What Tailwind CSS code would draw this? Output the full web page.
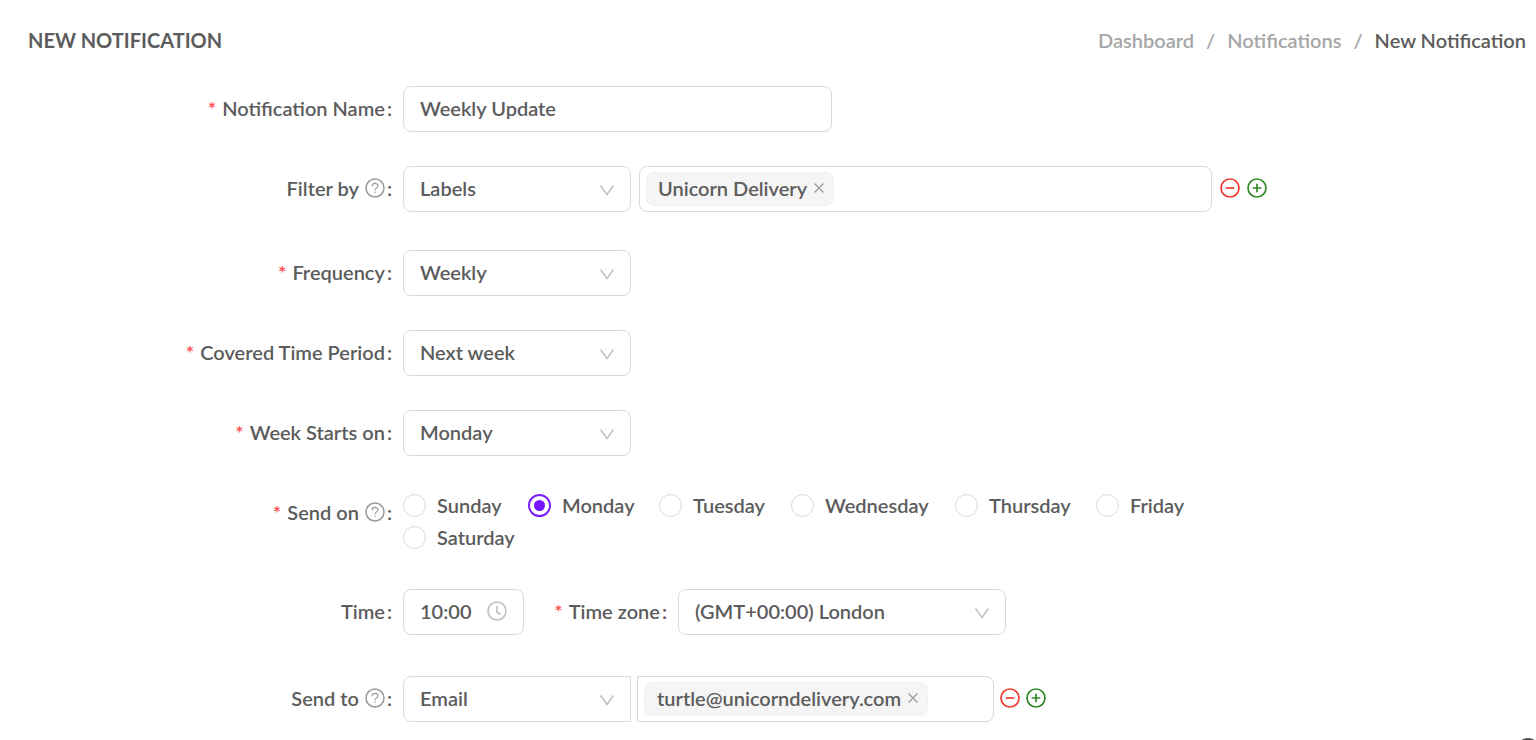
<!DOCTYPE html>
<html lang="en">
<head>
<meta charset="utf-8">
<meta name="viewport" content="width=device-width, initial-scale=1">
<title>New Notification</title>
<script src="https://cdn.jsdelivr.net/npm/@tailwindcss/browser@4"></script>
</head>
<body class="relative min-h-screen overflow-x-hidden bg-white font-['Lato','Open_Sans',sans-serif] text-xl leading-6 font-semibold text-[#5c5c5c]">

<svg class="hidden">
  <symbol id="chevron" viewBox="0 0 16 16"><path d="M1.500 3.500l6.500 9 6.500-9" fill="none" stroke="currentColor" stroke-width="1.500"/></symbol>
  <symbol id="help" viewBox="0 0 20 20"><g fill="none" stroke="currentColor"><circle cx="10" cy="10" r="9" stroke-width="1.500"/><path d="M7.200 8.200c0-3.900 5.700-3.700 5.700-.3 0 2-2.900 2-2.900 4.400" stroke-width="1.200"/></g><circle cx="10" cy="14.300" r=".8" fill="currentColor"/></symbol>
  <symbol id="cross" viewBox="0 0 12 12"><path d="M1.500 1.500l9 9M10.500 1.500l-9 9" fill="none" stroke="currentColor" stroke-width="1.200"/></symbol>
  <symbol id="minus" viewBox="0 0 20 20"><g fill="none" stroke="currentColor" stroke-width="1.700"><circle cx="10" cy="10" r="9"/><path d="M5.700 10h8.600"/></g></symbol>
  <symbol id="plus" viewBox="0 0 20 20"><g fill="none" stroke="currentColor" stroke-width="1.700"><circle cx="10" cy="10" r="9"/><path d="M5.700 10h8.600M10 5.700v8.600"/></g></symbol>
  <symbol id="clock" viewBox="0 0 20 20"><g fill="none" stroke="currentColor" stroke-width="1.600"><circle cx="10" cy="10" r="9"/><path d="M10 5v6l3.500 2.500"/></g></symbol>
</svg>

<header class="flex items-center justify-between pt-[26px] pr-2.5 pl-7">
  <h1 class="text-xl leading-7 font-bold">NEW NOTIFICATION</h1>
  <nav aria-label="Breadcrumb">
    <ol class="flex gap-3 leading-7 text-[#a6a6a6]">
      <li><a href="#">Dashboard</a></li>
      <li aria-hidden="true">/</li>
      <li><a href="#">Notifications</a></li>
      <li aria-hidden="true">/</li>
      <li class="text-[#5c5c5c]" aria-current="page">New Notification</li>
    </ol>
  </nav>
</header>

<form class="pt-8">
  <div class="mb-[34px] flex items-center gap-[11px]">
    <label for="name" class="w-[392px] shrink-0 pb-0.5 text-right"><span class="mr-1.5 text-[#ff4d4f]">*</span>Notification Name<span class="ml-0.5">:</span></label>
    <input id="name" type="text" value="Weekly Update" class="h-[46px] w-[429px] rounded-lg border border-[#d9d9d9] px-4 pb-0.5 outline-none">
  </div>

  <div class="mb-[38px] flex items-center gap-[11px]">
    <div class="flex w-[392px] shrink-0 items-center justify-end pb-0.5"><label for="filter" class="mr-1.5">Filter by</label><svg class="size-5 text-[#999999]"><use href="#help"/></svg><span class="ml-0.5">:</span></div>
    <div class="flex items-center">
      <div class="relative mr-2">
        <select id="filter" class="h-[46px] w-[228px] appearance-none rounded-lg border border-[#d9d9d9] bg-white px-4 pb-0.5 outline-none"><option>Labels</option></select>
        <svg class="pointer-events-none absolute top-4 right-4 size-4 text-[#bfbfbf]"><use href="#chevron"/></svg>
      </div>
      <div class="mr-2 flex h-[46px] w-[573px] items-center rounded-lg border border-[#d9d9d9] px-1.5">
        <span class="flex h-[34px] shrink-0 items-center gap-1.5 rounded-lg border border-[#f0f0f0] bg-[#f5f5f5] pr-2 pb-0.5 pl-[11px]">Unicorn Delivery<button type="button" aria-label="Remove Unicorn Delivery"><svg class="size-3 text-[#999999]"><use href="#cross"/></svg></button></span>
        <input type="text" aria-label="Label values" class="min-w-0 flex-1 outline-none">
      </div>
      <button type="button" aria-label="Remove filter" class="mr-[7px] pb-0.5 text-[#ee3a2c]"><svg class="size-5"><use href="#minus"/></svg></button>
      <button type="button" aria-label="Add filter" class="pb-0.5 text-[#2f8a25]"><svg class="size-5"><use href="#plus"/></svg></button>
    </div>
  </div>

  <div class="mb-[34px] flex items-center gap-[11px]">
    <label for="freq" class="w-[392px] shrink-0 pb-0.5 text-right"><span class="mr-1.5 text-[#ff4d4f]">*</span>Frequency<span class="ml-0.5">:</span></label>
    <div class="relative">
      <select id="freq" class="h-[46px] w-[228px] appearance-none rounded-lg border border-[#d9d9d9] bg-white px-4 pb-0.5 outline-none"><option>Weekly</option></select>
      <svg class="pointer-events-none absolute top-4 right-4 size-4 text-[#bfbfbf]"><use href="#chevron"/></svg>
    </div>
  </div>

  <div class="mb-[34px] flex items-center gap-[11px]">
    <label for="period" class="w-[392px] shrink-0 pb-0.5 text-right"><span class="mr-1.5 text-[#ff4d4f]">*</span>Covered Time Period<span class="ml-0.5">:</span></label>
    <div class="relative">
      <select id="period" class="h-[46px] w-[228px] appearance-none rounded-lg border border-[#d9d9d9] bg-white px-4 pb-0.5 outline-none"><option>Next week</option></select>
      <svg class="pointer-events-none absolute top-4 right-4 size-4 text-[#bfbfbf]"><use href="#chevron"/></svg>
    </div>
  </div>

  <div class="mb-[34px] flex items-center gap-[11px]">
    <label for="start" class="w-[392px] shrink-0 pb-0.5 text-right"><span class="mr-1.5 text-[#ff4d4f]">*</span>Week Starts on<span class="ml-0.5">:</span></label>
    <div class="relative">
      <select id="start" class="h-[46px] w-[228px] appearance-none rounded-lg border border-[#d9d9d9] bg-white px-4 pb-0.5 outline-none"><option>Monday</option></select>
      <svg class="pointer-events-none absolute top-4 right-4 size-4 text-[#bfbfbf]"><use href="#chevron"/></svg>
    </div>
  </div>

  <fieldset class="mb-[35px] flex items-start gap-[11px]" aria-labelledby="sendon">
    <div class="flex h-[46px] w-[392px] shrink-0 items-center justify-end pb-0.5"><span class="mr-1.5 text-[#ff4d4f]">*</span><span id="sendon" class="mr-1.5">Send on</span><svg class="size-5 text-[#999999]"><use href="#help"/></svg><span class="ml-0.5">:</span></div>
    <div class="grid max-w-[840px] grid-cols-[125px_131px_132px_164px_141px_auto] leading-8 whitespace-nowrap">
      <label class="flex h-8 items-center gap-[11px] pb-0.5"><input type="radio" name="day" class="size-[23px] shrink-0 appearance-none rounded-full border border-[#d9d9d9] checked:border-2 checked:border-[#7c1fff] checked:bg-[#7614fb] checked:bg-clip-content checked:p-1">Sunday</label>
      <label class="flex h-8 items-center gap-[11px] pb-0.5"><input type="radio" name="day" checked class="size-[23px] shrink-0 appearance-none rounded-full border border-[#d9d9d9] checked:border-2 checked:border-[#7c1fff] checked:bg-[#7614fb] checked:bg-clip-content checked:p-1">Monday</label>
      <label class="flex h-8 items-center gap-[11px] pb-0.5"><input type="radio" name="day" class="size-[23px] shrink-0 appearance-none rounded-full border border-[#d9d9d9] checked:border-2 checked:border-[#7c1fff] checked:bg-[#7614fb] checked:bg-clip-content checked:p-1">Tuesday</label>
      <label class="flex h-8 items-center gap-[11px] pb-0.5"><input type="radio" name="day" class="size-[23px] shrink-0 appearance-none rounded-full border border-[#d9d9d9] checked:border-2 checked:border-[#7c1fff] checked:bg-[#7614fb] checked:bg-clip-content checked:p-1">Wednesday</label>
      <label class="flex h-8 items-center gap-[11px] pb-0.5"><input type="radio" name="day" class="size-[23px] shrink-0 appearance-none rounded-full border border-[#d9d9d9] checked:border-2 checked:border-[#7c1fff] checked:bg-[#7614fb] checked:bg-clip-content checked:p-1">Thursday</label>
      <label class="flex h-8 items-center gap-[11px] pb-0.5"><input type="radio" name="day" class="size-[23px] shrink-0 appearance-none rounded-full border border-[#d9d9d9] checked:border-2 checked:border-[#7c1fff] checked:bg-[#7614fb] checked:bg-clip-content checked:p-1">Friday</label>
      <label class="flex h-8 items-center gap-[11px] pb-0.5"><input type="radio" name="day" class="size-[23px] shrink-0 appearance-none rounded-full border border-[#d9d9d9] checked:border-2 checked:border-[#7c1fff] checked:bg-[#7614fb] checked:bg-clip-content checked:p-1">Saturday</label>
    </div>
  </fieldset>

  <div class="mb-[41px] flex items-center gap-[11px]">
    <label for="time" class="w-[392px] shrink-0 pb-0.5 text-right">Time<span class="ml-0.5">:</span></label>
    <div class="flex h-[46px] w-[121px] items-center justify-between rounded-lg border border-[#d9d9d9] px-4 pb-0.5">
      <input id="time" type="text" value="10:00" class="w-14 outline-none">
      <svg class="size-5 shrink-0 text-[#bfbfbf]"><use href="#clock"/></svg>
    </div>
    <label for="zone" class="w-[132px] pb-0.5 text-right"><span class="mr-1.5 text-[#ff4d4f]">*</span>Time zone<span class="ml-0.5">:</span></label>
    <div class="relative">
      <select id="zone" class="h-[46px] w-[328px] appearance-none rounded-lg border border-[#d9d9d9] bg-white px-4 pb-0.5 outline-none"><option>(GMT+00:00) London</option></select>
      <svg class="pointer-events-none absolute top-4 right-4 size-4 text-[#bfbfbf]"><use href="#chevron"/></svg>
    </div>
  </div>

  <div class="flex items-center gap-[11px]">
    <div class="flex w-[392px] shrink-0 items-center justify-end pb-0.5"><label for="sendto" class="mr-1.5">Send to</label><svg class="size-5 text-[#999999]"><use href="#help"/></svg><span class="ml-0.5">:</span></div>
    <div class="flex items-center">
      <div class="relative mr-1.5">
        <select id="sendto" class="h-[46px] w-[228px] appearance-none rounded-l-lg border border-[#d9d9d9] bg-white px-4 pb-0.5 outline-none"><option>Email</option></select>
        <svg class="pointer-events-none absolute top-4 right-4 size-4 text-[#bfbfbf]"><use href="#chevron"/></svg>
      </div>
      <div class="mr-1.5 flex h-[46px] w-[357px] items-center rounded-r-lg border border-[#d9d9d9] px-1.5">
        <span class="flex h-[34px] shrink-0 items-center gap-1.5 rounded-lg border border-[#f0f0f0] bg-[#f5f5f5] pr-2 pb-0.5 pl-3">turtle@unicorndelivery.com<button type="button" aria-label="Remove turtle@unicorndelivery.com"><svg class="size-3 text-[#999999]"><use href="#cross"/></svg></button></span>
        <input type="text" aria-label="Recipients" class="min-w-0 flex-1 outline-none">
      </div>
      <button type="button" aria-label="Remove recipient" class="mr-1.5 pb-0.5 text-[#ee3a2c]"><svg class="size-5"><use href="#minus"/></svg></button>
      <button type="button" aria-label="Add recipient" class="pb-0.5 text-[#2f8a25]"><svg class="size-5"><use href="#plus"/></svg></button>
    </div>
  </div>
</form>

<button type="button" aria-label="Open help" class="fixed right-[-4px] bottom-[-22px] size-6 rounded-full bg-[#555555]"></button>
</body>
</html>
